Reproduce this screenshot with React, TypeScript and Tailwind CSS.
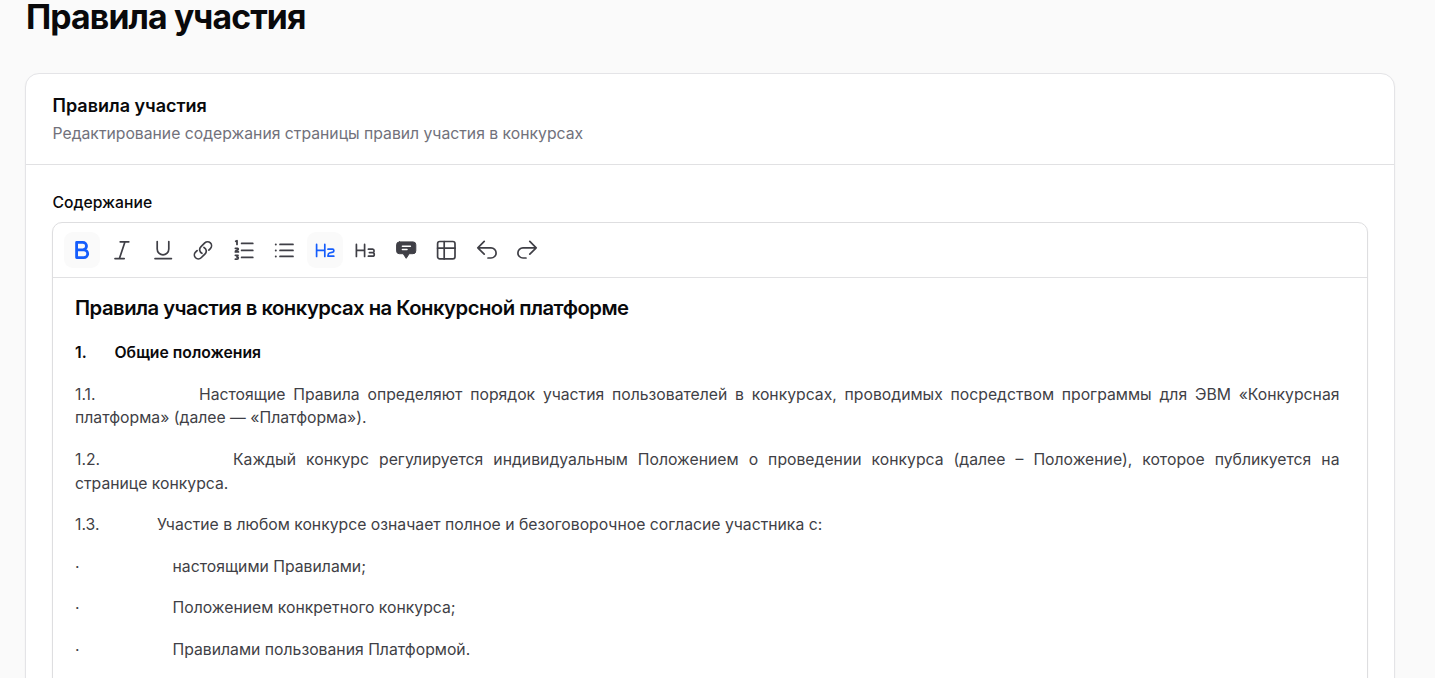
import type { ReactNode } from "react";

function Icon({ children }: { children: ReactNode }) {
  return (
    <svg
      viewBox="0 0 22 22"
      className="size-[22px]"
      fill="none"
      stroke="currentColor"
      strokeWidth={1.7}
      strokeLinecap="round"
      strokeLinejoin="round"
      aria-hidden
    >
      {children}
    </svg>
  );
}

const TOOLS: { name: string; active?: boolean; icon: ReactNode }[] = [
  {
    name: "Bold",
    active: true,
    icon: (
      <path
        strokeWidth={2.8}
        d="M5.6 3.4h6.2a3.7 3.7 0 0 1 0 7.4H5.6zM5.6 10.8h7.2a3.9 3.9 0 0 1 0 7.8H5.6z"
      />
    ),
  },
  { name: "Italic", icon: <path d="M9.2 2.8h8.6M4 19.6h9.2M14 2.8 8.4 19.6" /> },
  {
    name: "Underline",
    icon: <path d="M5.2 2.6v7.4a5.8 5.8 0 0 0 11.6 0V2.6M3 19.6h16.4" />,
  },
  {
    name: "Link",
    icon: (
      <path
        transform="translate(.4 .8) scale(.88)"
        strokeWidth={1.9}
        d="M13.19 8.688a4.5 4.5 0 0 1 1.242 7.244l-4.5 4.5a4.5 4.5 0 0 1-6.364-6.364l1.757-1.757m13.35-.622 1.757-1.757a4.5 4.5 0 0 0-6.364-6.364l-4.5 4.5a4.5 4.5 0 0 0 1.242 7.244"
      />
    ),
  },
  {
    name: "Numbered list",
    icon: (
      <>
        <path d="M8.6 4.4h11.2M8.6 11.4h11.2M8.6 18.4h11.2" />
        <path
          strokeWidth={1.8}
          d="M2.8 2.4l1.2-.7v3.7M2.4 9.3h2.3c.7 0 .7 1.5 0 1.7l-1.5.5c-.6.2-.8.6-.8 1.4h3M2.4 16.3H5L4 18c1.7 0 1.6 2.2 0 2.2H2.4"
        />
      </>
    ),
  },
  {
    name: "Bullet list",
    icon: (
      <>
        <path d="M7 5.4h13M7 11.4h13M7 17.4h13" />
        <path strokeWidth={2} d="M2.8 5.4h.01M2.8 11.4h.01M2.8 17.4h.01" />
      </>
    ),
  },
  {
    name: "Heading 2",
    active: true,
    icon: (
      <path d="M2.6 5.4v12M10.8 5.4v12M2.6 11.4h8.2M14 10.2h4.6c1.6 0 1.6 2.6.2 3l-3.4.8c-1 .3-1.4.9-1.4 3.2h5.8" />
    ),
  },
  {
    name: "Heading 3",
    icon: (
      <path d="M2.4 5.4v12M10.6 5.4v12M2.4 11.4h8.2M14.4 10.2h4.2c2 0 2 3.4 0 3.4h-3.2 3.2c2.2 0 2.2 3.6 0 3.6h-4.2" />
    ),
  },
  {
    name: "Quote",
    icon: (
      <>
        <path
          fill="currentColor"
          strokeWidth={1}
          d="M4.4 2.9H18a2.8 2.8 0 0 1 2.8 2.8v6.2a2.8 2.8 0 0 1-2.8 2.8h-3.8l-3 4.6-3-4.6H4.4a2.8 2.8 0 0 1-2.8-2.8V5.7a2.8 2.8 0 0 1 2.8-2.8z"
        />
        <path stroke="#fff" strokeWidth={1.5} d="M7.4 7.2h8M7.4 10.4H12" />
      </>
    ),
  },
  {
    name: "Table",
    icon: (
      <>
        <rect x="2.6" y="2.5" width="17.4" height="17.4" rx="2.2" />
        <path d="M9.2 2.5v17.4M2.6 9.2H20" />
      </>
    ),
  },
  {
    name: "Undo",
    icon: (
      <path d="M8.2 15.2 1.8 8.8l6.4-6.4M1.8 8.8H15a5.1 5.1 0 0 1 0 10.2h-3" />
    ),
  },
  {
    name: "Redo",
    icon: (
      <path d="M13.8 15.2l6.4-6.4-6.4-6.4M20.2 8.8H7A5.1 5.1 0 0 0 7 19h3" />
    ),
  },
];

const BULLETS = [
  "настоящими Правилами;",
  "Положением конкретного конкурса;",
  "Правилами пользования Платформой.",
];

function Toolbar() {
  return (
    <div className="flex h-[55px] items-center gap-[4.47px] border-b border-[#e1e1e3] px-[11px]">
      {TOOLS.map((tool) => (
        <button
          key={tool.name}
          type="button"
          aria-label={tool.name}
          className={`flex size-9 items-center justify-center rounded-[9px] ${
            tool.active ? "bg-[#fafafa] text-[#155dfc]" : "text-[#3f3f46]"
          }`}
        >
          <Icon>{tool.icon}</Icon>
        </button>
      ))}
    </div>
  );
}

export default function App() {
  return (
    <main className="h-[678px] overflow-hidden bg-[#fafafa] pl-[25px] pr-10 font-['Inter',sans-serif] text-[#09090b]">
      <h1 className="h-[73px] pl-px text-[33.75px] leading-[34px] font-bold tracking-[-0.87px]">
        Правила участия
      </h1>

      <section className="h-[700px] rounded-[14px] border border-[#e4e4e7] bg-white shadow-xs">
        <header className="h-[91px] border-b border-[#e1e1e3] px-[26.5px] pt-[18px]">
          <h2 className="text-[18px] leading-7 font-semibold">Правила участия</h2>
          <p className="text-[15.74px] leading-7 text-[#71717b]">
            Редактирование содержания страницы правил участия в конкурсах
          </p>
        </header>

        <div className="px-[26px] pt-[26px]">
          <div className="mb-[7px] pl-[0.5px] text-[15.7px] leading-6 font-medium">
            Содержание
          </div>
          <div className="h-[600px] rounded-[10px] border border-[#dedee0] shadow-xs">
            <Toolbar />
            <article className="pl-[22px] pr-[27.5px] pt-[15px] text-[15.75px] leading-[23.63px] text-[#3f3f46]">
              <h2 className="mb-[18px] text-[20.25px] leading-[30px] font-semibold tracking-[-0.5px] text-[#09090b]">
                Правила участия в конкурсах на Конкурсной платформе
              </h2>
              <p className="mb-[18px] font-semibold text-[#09090b]">
                <span className="inline-block w-[39.5px]">1.</span>Общие положения
              </p>
              <p className="mb-[18px] text-justify">
                <span className="inline-block w-[124px]">1.1.</span>Настоящие Правила
                определяют порядок участия пользователей в конкурсах, проводимых
                посредством программы для ЭВМ «Конкурсная платформа» (далее —
                «Платформа»).
              </p>
              <p className="mb-[18px] text-justify">
                <span className="inline-block w-[158px]">1.2.</span>Каждый конкурс
                регулируется индивидуальным Положением о проведении конкурса (далее
                – Положение), которое публикуется на странице конкурса.
              </p>
              <p className="mb-[18px]">
                <span className="inline-block w-[82px]">1.3.</span>Участие в любом
                конкурсе означает полное и безоговорочное согласие участника с:
              </p>
              {BULLETS.map((text) => (
                <p key={text} className="mb-[18px]">
                  <span className="inline-block w-[97.5px]">·</span>
                  {text}
                </p>
              ))}
            </article>
          </div>
        </div>
      </section>
    </main>
  );
}
